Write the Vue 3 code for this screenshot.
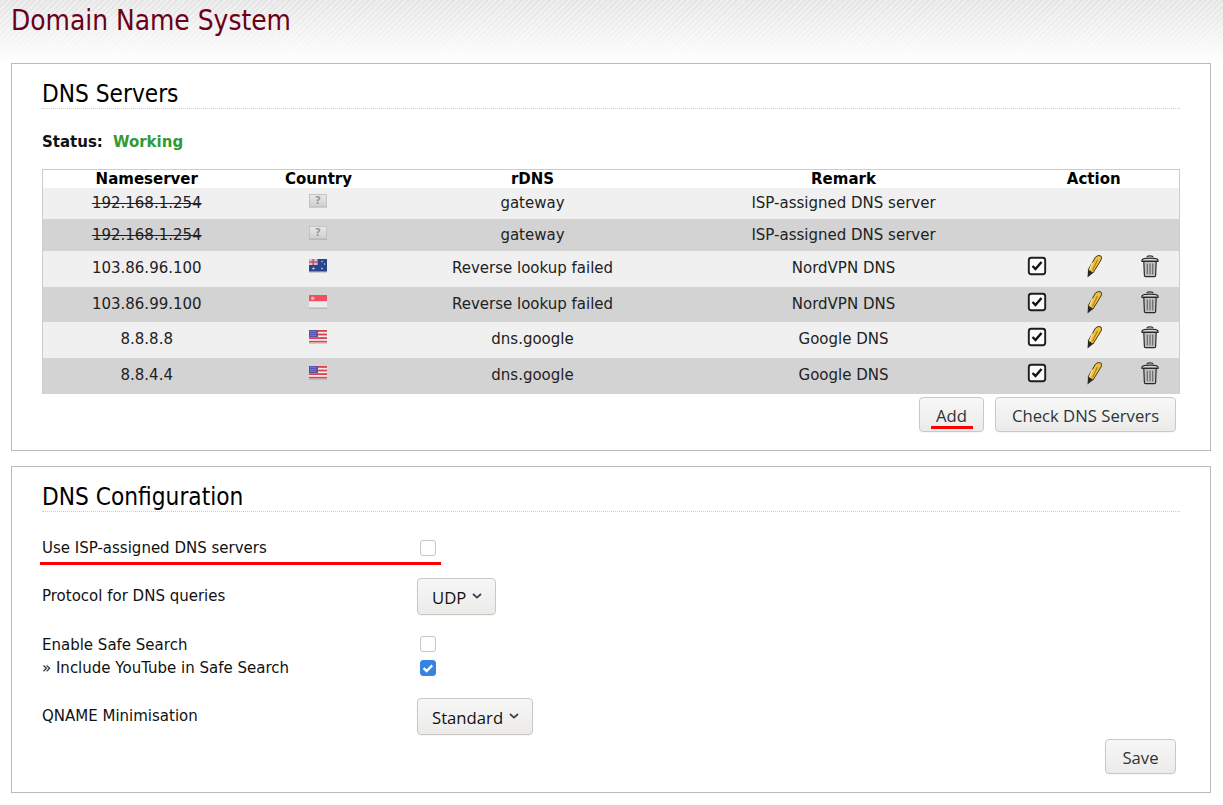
<script setup>
const rows = [
  { ip: '192.168.1.254', off: true, flag: 'q', rdns: 'gateway', remark: 'ISP-assigned DNS server', h: 31 },
  { ip: '192.168.1.254', off: true, flag: 'q', rdns: 'gateway', remark: 'ISP-assigned DNS server', h: 32 },
  { ip: '103.86.96.100', flag: 'au', rdns: 'Reverse lookup failed', remark: 'NordVPN DNS', action: true, h: 36 },
  { ip: '103.86.99.100', flag: 'sg', rdns: 'Reverse lookup failed', remark: 'NordVPN DNS', action: true, h: 35 },
  { ip: '8.8.8.8', flag: 'us', rdns: 'dns.google', remark: 'Google DNS', action: true, h: 36 },
  { ip: '8.8.4.4', flag: 'us', rdns: 'dns.google', remark: 'Google DNS', action: true, h: 36 }
]
</script>

<template>
  <div class="page">
    <header class="top"><h1>Domain Name System</h1></header>

    <section class="box first">
      <h2>DNS Servers</h2>
      <p class="status"><b>Status:</b><b class="ok">Working</b></p>

      <table>
        <colgroup>
          <col class="c1" /><col class="c2" /><col class="c3" /><col class="c4" /><col class="c5" /><col class="c5b" /><col class="c6" />
        </colgroup>
        <thead>
          <tr><th>Nameserver</th><th>Country</th><th>rDNS</th><th>Remark</th><th colspan="3">Action</th></tr>
        </thead>
        <tbody>
          <tr v-for="(r, i) in rows" :key="i" :class="[i % 2 ? 'dark' : 'light', r.action ? 'act' : 'plain']" :style="{ height: r.h + 'px' }">
            <td><s v-if="r.off">{{ r.ip }}</s><template v-else>{{ r.ip }}</template></td>
            <td>
              <svg class="flag" viewBox="0 0 18 14" width="18" height="14">
                <defs>
                  <pattern id="stripes" width="18" height="3.6" patternUnits="userSpaceOnUse">
                    <rect width="18" height="1.8" fill="#d8434f" />
                    <rect y="1.8" width="18" height="1.8" fill="#f5e8e8" />
                  </pattern>
                  <linearGradient id="qbg" x1="0" y1="0" x2="0" y2="1">
                    <stop offset="0" stop-color="#e8e8e8" />
                    <stop offset="1" stop-color="#cfcfcf" />
                  </linearGradient>
                </defs>
                <rect x="0" y="1" width="18" height="13" fill="#8a8a8a" opacity=".35" />
                <template v-if="r.flag === 'q'">
                  <rect x=".5" y=".5" width="17" height="12" fill="url(#qbg)" stroke="#c4c4c4" />
                  <text x="9" y="10" text-anchor="middle" class="qm">?</text>
                </template>
                <template v-else-if="r.flag === 'au'">
                  <rect width="18" height="12.5" fill="#27468f" />
                  <rect width="8.5" height="6" fill="#c9c3d6" />
                  <path d="M4.2 0v6M0 3h8.5" stroke="#dc4a5c" stroke-width="1.6" />
                  <circle cx="4.5" cy="9.5" r="1.1" fill="#dfe4f2" />
                  <circle cx="13" cy="2.5" r=".7" fill="#dfe4f2" />
                  <circle cx="15.5" cy="5" r=".7" fill="#dfe4f2" />
                  <circle cx="13" cy="9.5" r=".8" fill="#dfe4f2" />
                </template>
                <template v-else-if="r.flag === 'sg'">
                  <rect width="18" height="12.5" fill="#ececec" />
                  <rect width="18" height="6.2" fill="#ee4f63" />
                  <rect x="2" y="1.5" width="3.5" height="3.5" rx="1.7" fill="#f9a9b0" />
                </template>
                <template v-else>
                  <rect width="18" height="12.5" fill="url(#stripes)" />
                  <rect width="9" height="7" fill="#5555b0" />
                  <path d="M1.5 1.5h6M1.5 3.4h6M1.5 5.3h6" stroke="#b6b6da" stroke-width=".7" stroke-dasharray="1 1" />
                </template>
              </svg>
            </td>
            <td>{{ r.rdns }}</td>
            <td>{{ r.remark }}</td>
            <td>
              <svg v-if="r.action" class="ico" viewBox="0 0 20 20" width="20" height="20">
                <rect x="1.8" y="1.8" width="16.4" height="16.4" rx="2.5" fill="#fbfbfb" stroke="#1e1e1e" stroke-width="1.9" />
                <path d="M5.5 10l3 3 6-7" fill="none" stroke="#111" stroke-width="2.4" />
              </svg>
            </td>
            <td>
              <svg v-if="r.action" class="ico pen" viewBox="0 0 20 24" width="20" height="24">
                <path d="M4 16L11.5 3Q14 .5 17 2Q18.2 3.5 17 6L9 19Z" fill="#eec040" stroke="#4a3a10" stroke-width="1" />
                <path d="M8.5 8.5L5.8 15.5" stroke="#fbe7a0" stroke-width="1.3" />
                <path d="M13.5 6L8.5 16.5" stroke="#b5811f" stroke-width="1.2" />
                <path d="M4 16L9 19L3.5 23.5Z" fill="#262626" />
              </svg>
            </td>
            <td>
              <svg v-if="r.action" class="ico trash" viewBox="0 0 20 24" width="20" height="24">
                <path d="M7 3.2c0-1.9 6-1.9 6 0" fill="none" stroke="#333" stroke-width="1.2" />
                <path d="M2 6c1-2.4 15-2.4 16 0v1.4H2z" fill="#d6d6d6" stroke="#262626" stroke-width="1.2" />
                <path d="M3.8 7.4h12.4l-.6 14c0 .7-.6 1.2-1.2 1.2H5.7c-.7 0-1.3-.5-1.3-1.2z" fill="#c2c2c2" stroke="#2a2a2a" stroke-width="1.2" />
                <path d="M7.3 9.5v11M10 9.5v11M12.7 9.5v11" stroke="#6a6a6a" stroke-width="1.2" />
              </svg>
            </td>
          </tr>
        </tbody>
      </table>

      <div class="actions">
        <button class="btn add">Add<span class="mark"></span></button>
        <button class="btn check">Check DNS Servers</button>
      </div>
    </section>

    <section class="box second">
      <h2>DNS Configuration</h2>

      <div class="row r-isp">
        <label>Use ISP-assigned DNS servers</label>
        <span class="cb-wrap"><span class="cb"></span></span>
        <span class="line"></span>
      </div>
      <div class="row r-proto">
        <label>Protocol for DNS queries</label>
        <button class="btn select udp">UDP<svg viewBox="0 0 10 6" width="10" height="6"><path d="M1 1l4 3.6L9 1" fill="none" stroke="#3a4045" stroke-width="1.7" /></svg></button>
      </div>
      <div class="row r-safe">
        <label>Enable Safe Search</label>
        <span class="cb-wrap"><span class="cb"></span></span>
      </div>
      <div class="row r-yt">
        <label>» Include YouTube in Safe Search</label>
        <span class="cb-wrap">
          <span class="cb on">
            <svg viewBox="0 0 16 16" width="16" height="16"><path d="M3.6 8.2l3 2.8 5.6-5.6" fill="none" stroke="#fff" stroke-width="2.4" /></svg>
          </span>
        </span>
      </div>
      <div class="row r-qname">
        <label>QNAME Minimisation</label>
        <button class="btn select std">Standard<svg viewBox="0 0 10 6" width="10" height="6"><path d="M1 1l4 3.6L9 1" fill="none" stroke="#3a4045" stroke-width="1.7" /></svg></button>
      </div>

      <div class="save-row"><button class="btn save">Save</button></div>
    </section>
  </div>
</template>

<style scoped>
.page {
  width: 1223px;
  height: 805px;
  overflow: hidden;
  font-family: "DejaVu Sans", sans-serif;
  font-size: 15px;
  color: #111;
  background: #fff;
}
.top {
  height: 63px;
  box-sizing: border-box;
  padding: 4px 11px 0;
  background:
    linear-gradient(to bottom, rgba(255,255,255,0) 0, #fff 100%),
    repeating-linear-gradient(135deg, #e4e4e4 0 2px, #eeeeee 2px 4px);
}
h1 {
  margin: 0;
  font-family: "DejaVu Sans Condensed", "DejaVu Sans", sans-serif;
  font-stretch: condensed;
  font-size: 27.8px;
  line-height: 34px;
  font-weight: 400;
  color: #6b0018;
}
.box {
  margin: 0 12px 0 11px;
  border: 1px solid #bbb;
  padding: 0 30px;
  box-sizing: border-box;
}
.first { height: 388px; margin-bottom: 15px; }
.second { height: 327px; }
h2 {
  margin: 0;
  height: 45px;
  box-sizing: border-box;
  padding-top: 15px;
  line-height: 30px;
  font-family: "DejaVu Sans Condensed", "DejaVu Sans", sans-serif;
  font-stretch: condensed;
  font-size: 24.2px;
  font-weight: 400;
  color: #000;
  border-bottom: 1px dotted #ccc;
}
.status {
  margin: 0;
  padding-top: 24px;
  height: 60px;
  box-sizing: border-box;
  line-height: 18px;
  display: flex;
  gap: 10px;
}
.ok { color: #339933; }
table {
  width: 1137px;
  table-layout: fixed;
  border-collapse: collapse;
  border: 1px solid #ccc;
  border-bottom: 0;
}
.c1 { width: 208px; }
.c2 { width: 136px; }
.c3 { width: 292px; }
.c4 { width: 330px; }
.c5 { width: 57px; }
.c5b { width: 58px; }
.c6 { width: 56px; }
th {
  height: 18px;
  padding: 0;
  line-height: 18px;
  font-weight: 700;
  text-align: center;
  color: #000;
}
td {
  padding: 0;
  text-align: center;
  line-height: 18px;
  color: #222;
}
.plain td { padding-bottom: 2px; }
.plain.dark td { padding-bottom: 0; }
.act td { padding-bottom: 2px; }
.light { background: #f0f0f0; }
.dark { background: #d3d3d3; }
.flag { display: block; margin: -4px auto 0; transform: translateX(-1px); }
.ico { display: block; margin: -4px auto 0; }
.pen { transform: translateX(-1px); }
.trash { transform: translateX(-1px); }
.qm { font-size: 10px; font-weight: 700; fill: #999; font-family: "DejaVu Sans", sans-serif; }
.actions {
  display: flex;
  justify-content: flex-end;
  gap: 11px;
  padding: 3px 4px 0 0;
}
.btn {
  position: relative;
  box-sizing: border-box;
  height: 35px;
  padding: 2px 0 0;
  border: 1px solid #cdc7c2;
  border-radius: 4px;
  background: linear-gradient(to bottom, #f7f7f7, #ecebea);
  font-family: "Open Sans", sans-serif;
  font-size: 16.7px;
  color: #2e3436;
  box-shadow: 0 1px 1px rgba(0,0,0,.04);
}
.add { width: 65px; }
.check { width: 181px; }
.save { width: 71px; }
.mark {
  position: absolute;
  left: 11px;
  bottom: 2px;
  width: 42px;
  height: 3px;
  background: #f00;
}
.row {
  position: relative;
  display: grid;
  grid-template-columns: 375px auto;
  justify-content: start;
  align-items: center;
}
.row label { line-height: 18px; color: #111; }
.cb-wrap { padding-left: 3px; display: block; height: 16px; }
.cb {
  display: block;
  box-sizing: border-box;
  width: 16px;
  height: 16px;
  border: 1px solid #cdc7c2;
  border-radius: 3px;
  background: #fff;
}
.cb.on { background: #3584e4; border-color: #3584e4; }
.cb.on svg { display: block; margin: -1px; }
.r-isp { height: 24px; margin-top: 24px; }
.line {
  position: absolute;
  left: -2px;
  top: 26px;
  width: 401px;
  height: 3px;
  background: #f00;
}
.r-proto { height: 37px; margin-top: 18px; }
.r-proto label { margin-top: -1px; }
.r-safe { height: 22px; margin-top: 18px; }
.r-safe label { margin-top: 2px; }
.r-yt { height: 24px; margin-top: 1px; }
.r-qname { height: 37px; margin-top: 18px; }
.r-qname label { margin-top: -1px; }
.select {
  height: 37px;
  display: inline-flex;
  align-items: center;
  justify-content: flex-start;
  padding-left: 14px;
  gap: 6px;
  color: #111;
}
.select svg { margin-top: -4px; }
.udp { width: 79px; }
.std { width: 116px; }
.save-row {
  display: flex;
  justify-content: flex-end;
  padding: 4px 4px 0 0;
}
</style>
